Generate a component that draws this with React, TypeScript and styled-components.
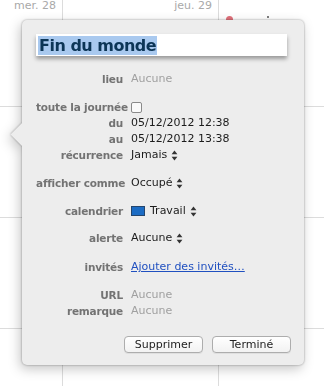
import React from "react";
import styled, { createGlobalStyle } from "styled-components";

const GlobalStyle = createGlobalStyle`
  html, body {
    margin: 0;
    padding: 0;
    background: #fff;
  }
  body {
    font-family: "DejaVu Sans", "Liberation Sans", sans-serif;
  }
`;

const Page = styled.div`
  position: relative;
  width: 324px;
  height: 386px;
  overflow: hidden;
  background: #fff;
`;

const CalendarGrid = styled.div`
  display: grid;
  grid-template-columns: 63px 156px 1fr;
  grid-template-rows: 107px 111px 111px 1fr;
  height: 100%;
`;

const Cell = styled.div<{ $lastCol?: boolean; $lastRow?: boolean }>`
  position: relative;
  box-sizing: border-box;
  border-right: ${(p) => (p.$lastCol ? "none" : "1px solid #dcdcdc")};
  border-bottom: ${(p) => (p.$lastRow ? "none" : "1px solid #dcdcdc")};
  display: flex;
  justify-content: flex-end;
  align-items: flex-start;
`;

const DayLabel = styled.span`
  font-size: 11px;
  line-height: 12px;
  color: #a9a9a9;
  margin-top: 0;
  margin-right: 6px;
`;

// little event marks peeking out from behind the popover
const EventDot = styled.span<{ $color: string; $left: number; $size: number }>`
  position: absolute;
  top: 16px;
  left: ${(p) => p.$left}px;
  width: ${(p) => p.$size}px;
  height: ${(p) => p.$size}px;
  border-radius: 50%;
  background: ${(p) => p.$color};
`;

const Popover = styled.div`
  position: absolute;
  left: 22px;
  top: 20px;
  width: 282px;
  height: 345px;
  box-sizing: border-box;
  background: #ededed;
  border-radius: 5px;
  padding: 14px 13px 12px 14px;
  display: flex;
  flex-direction: column;
  filter: drop-shadow(0 0 1px rgba(0, 0, 0, 0.35))
    drop-shadow(-2px 4px 6px rgba(0, 0, 0, 0.22));

  &::before {
    content: "";
    position: absolute;
    left: -8px;
    top: 106px;
    width: 17px;
    height: 17px;
    background: #ededed;
    transform: rotate(45deg);
  }
`;

const TitleField = styled.div`
  height: 22px;
  width: 251px;
  background: #fff;
  box-shadow: 0 3px 4px rgba(0, 0, 0, 0.35);
  display: flex;
  align-items: center;
  padding-left: 2px;
  box-sizing: border-box;
`;

const TitleText = styled.span`
  background: #a9c9ef;
  color: #0c3556;
  font-weight: bold;
  font-size: 16px;
  letter-spacing: -0.5px;
  line-height: 19px;
  padding: 0 1px;
`;

const Row = styled.div<{ $gap: number }>`
  display: grid;
  grid-template-columns: 87px 1fr;
  column-gap: 8px;
  margin-top: ${(p) => p.$gap}px;
  line-height: 16px;
  height: 16px;
  align-items: center;
`;

const Label = styled.span`
  text-align: right;
  font-weight: bold;
  font-size: 10.5px;
  letter-spacing: -0.2px;
  color: #737373;
  white-space: nowrap;
`;

const Value = styled.span<{ $muted?: boolean }>`
  font-size: 11px;
  color: ${(p) => (p.$muted ? "#a0a0a0" : "#1c1c1c")};
  display: flex;
  align-items: center;
  white-space: nowrap;
`;

const LinkValue = styled.a`
  font-size: 11px;
  color: #2050c0;
  text-decoration: underline;
  white-space: nowrap;
`;

const Checkbox = styled.span`
  width: 9px;
  height: 9px;
  border: 1px solid #8a8a8a;
  border-radius: 2px;
  background: #fafafa;
`;

const Swatch = styled.span`
  width: 12px;
  height: 8px;
  background: #1c6cc4;
  border: 1px solid #24466e;
  margin-right: 5px;
`;

const Buttons = styled.div`
  margin-top: auto;
  display: flex;
  justify-content: flex-end;
  gap: 9px;
`;

const Button = styled.button`
  width: 79px;
  height: 17px;
  padding: 0;
  font-family: "DejaVu Sans", sans-serif;
  font-size: 11px;
  color: #222;
  background: linear-gradient(#ffffff, #f2f2f2);
  border: 1px solid #adadad;
  border-radius: 4px;
  box-shadow: 0 1px 0 rgba(0, 0, 0, 0.06);
`;

const Stepper = () => (
  <svg width="7" height="11" viewBox="0 0 7 11" style={{ marginLeft: 4 }}>
    <path d="M3.5 0.5 L6.4 4.3 L0.6 4.3 Z" fill="#333" />
    <path d="M3.5 10.5 L6.4 6.7 L0.6 6.7 Z" fill="#333" />
  </svg>
);

const App = () => (
  <Page>
    <GlobalStyle />
    <CalendarGrid>
      <Cell>
        <DayLabel>mer. 28</DayLabel>
      </Cell>
      <Cell>
        <DayLabel>jeu. 29</DayLabel>
      </Cell>
      <Cell $lastCol>
        <EventDot $color="#e0707a" $left={7} $size={7} />
        <EventDot $color="#555" $left={48} $size={2} />
      </Cell>
      <Cell />
      <Cell />
      <Cell $lastCol />
      <Cell />
      <Cell />
      <Cell $lastCol />
      <Cell $lastRow />
      <Cell $lastRow />
      <Cell $lastRow $lastCol />
    </CalendarGrid>

    <Popover>
      <TitleField>
        <TitleText>Fin du monde</TitleText>
      </TitleField>

      <Row $gap={15}>
        <Label>lieu</Label>
        <Value $muted>Aucune</Value>
      </Row>

      <Row $gap={12}>
        <Label>toute la journée</Label>
        <Value>
          <Checkbox />
        </Value>
      </Row>
      <Row $gap={0}>
        <Label>du</Label>
        <Value>05/12/2012 12:38</Value>
      </Row>
      <Row $gap={0}>
        <Label>au</Label>
        <Value>05/12/2012 13:38</Value>
      </Row>
      <Row $gap={0}>
        <Label>récurrence</Label>
        <Value>
          Jamais
          <Stepper />
        </Value>
      </Row>

      <Row $gap={12}>
        <Label>afficher comme</Label>
        <Value>
          Occupé
          <Stepper />
        </Value>
      </Row>
      <Row $gap={12}>
        <Label>calendrier</Label>
        <Value>
          <Swatch />
          Travail
          <Stepper />
        </Value>
      </Row>
      <Row $gap={11}>
        <Label>alerte</Label>
        <Value>
          Aucune
          <Stepper />
        </Value>
      </Row>
      <Row $gap={13}>
        <Label>invités</Label>
        <LinkValue href="#">Ajouter des invités…</LinkValue>
      </Row>

      <Row $gap={12}>
        <Label>URL</Label>
        <Value $muted>Aucune</Value>
      </Row>
      <Row $gap={0}>
        <Label>remarque</Label>
        <Value $muted>Aucune</Value>
      </Row>

      <Buttons>
        <Button>Supprimer</Button>
        <Button>Terminé</Button>
      </Buttons>
    </Popover>
  </Page>
);

export default App;
